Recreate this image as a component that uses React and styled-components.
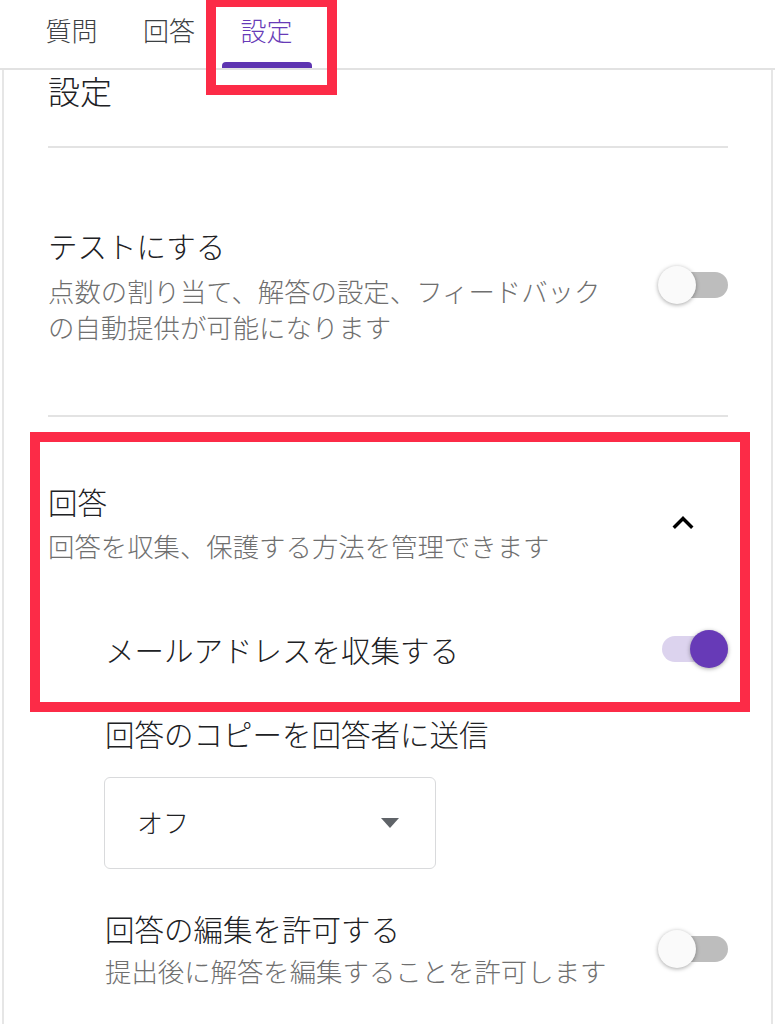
import React from "react";
import styled, { createGlobalStyle } from "styled-components";

const Global = createGlobalStyle`
  html, body { margin: 0; padding: 0; background: #ffffff; }
  body {
    font-family: "Noto Sans CJK JP", "Noto Sans", sans-serif;
    font-weight: 300;
    color: #202124;
    -webkit-font-smoothing: antialiased;
  }
  * { box-sizing: border-box; }
`;

const Page = styled.div`
  width: 775px;
  min-height: 1024px;
  overflow: hidden;
  display: flex;
  flex-direction: column;
`;

const TabBar = styled.div`
  height: 70px;
  display: flex;
  gap: 7.5px;
  padding-left: 26.5px;
  border-bottom: 2px solid #e2e2e2;
`;

const Tab = styled.div`
  position: relative;
  width: 90px;
  height: 68px;
  display: flex;
  flex-direction: column;
  align-items: center;
  justify-content: space-between;
  padding-top: 12px;
  font-size: 26px;
  line-height: 36px;
  color: ${(p) => (p.$active ? "#673ab7" : "#3c4043")};
`;

const Indicator = styled.div`
  width: 100%;
  height: 6px;
  border-radius: 4px 4px 0 0;
  background: #5e35b1;
`;

const Annotation = styled.div`
  position: absolute;
  border: 10px solid #fc2b47;
  pointer-events: none;
  z-index: 5;
`;

const TabAnnotation = styled(Annotation)`
  top: -3px;
  left: -16px;
  width: 131px;
  height: 98px;
`;

const Card = styled.div`
  flex: 1;
  margin: 0 2px;
  border-left: 2px solid #e6e6e6;
  border-right: 2px solid #e6e6e6;
  padding: 0 43px 40px 44px;
`;

const Heading = styled.div`
  font-size: 32px;
  line-height: 40px;
`;

const Divider = styled.div`
  height: 2px;
  background: #e3e3e3;
  margin-top: ${(p) => p.$top || 0}px;
`;

const Row = styled.div`
  display: flex;
  align-items: center;
  justify-content: space-between;
  padding-left: ${(p) => (p.$indent ? 57 : 0)}px;
  margin-top: ${(p) => p.$top || 0}px;
  margin-bottom: ${(p) => p.$bottom || 0}px;
`;

const TextBlock = styled.div`
  display: flex;
  flex-direction: column;
  gap: ${(p) => p.$gap || 8}px;
`;

const Title = styled.div`
  font-size: 29.5px;
  line-height: 40px;
  color: #202124;
`;

const Sub = styled.div`
  font-size: 26.4px;
  line-height: 36px;
  color: #6f6f6f;
  max-width: ${(p) => p.$max || 620}px;
`;

const SwitchBox = styled.div`
  position: relative;
  width: 70px;
  height: 38px;
  flex-shrink: 0;
`;

const Track = styled.div`
  position: absolute;
  left: 4px;
  right: 0;
  top: 6px;
  height: 26px;
  border-radius: 13px;
  background: ${(p) => (p.$on ? "#dcd3ee" : "#bdbdbd")};
`;

const Thumb = styled.div`
  position: absolute;
  top: 0;
  left: ${(p) => (p.$on ? 32 : 0)}px;
  width: 38px;
  height: 38px;
  border-radius: 50%;
  background: ${(p) => (p.$on ? "#673ab7" : "#fafafa")};
  box-shadow: 0 1px 4px rgba(0, 0, 0, 0.35);
`;

const Switch = ({ on }) => (
  <SwitchBox>
    <Track $on={on} />
    <Thumb $on={on} />
  </SwitchBox>
);

const Highlight = styled.div`
  position: relative;
`;

const BoxAnnotation = styled(Annotation)`
  top: 15px;
  left: -18px;
  right: -22px;
  bottom: -43px;
`;

const SectionHeader = styled.div`
  display: flex;
  align-items: center;
  justify-content: space-between;
  padding-top: 64px;
`;

const IconButton = styled.div`
  width: 48px;
  height: 48px;
  margin-right: 21px;
  display: flex;
  align-items: center;
  justify-content: center;
  color: #000;
`;

const Label = styled.div`
  font-size: 29.5px;
  line-height: 40px;
  padding-left: 57px;
  margin-top: 44px;
`;

const SelectBox = styled.div`
  margin: 24px 0 0 56px;
  width: 332px;
  height: 92px;
  border: 1.5px solid #d9dadc;
  border-radius: 6px;
  display: flex;
  align-items: center;
  justify-content: space-between;
  padding: 0 36px 4px 32px;
  font-size: 26px;
  color: #202124;
`;

const Caret = styled.svg`
  margin-top: 4px;
`;

export default function App() {
  return (
    <Page>
      <Global />
      <TabBar>
        <Tab>
          <span>質問</span>
        </Tab>
        <Tab>
          <span>回答</span>
        </Tab>
        <Tab $active>
          <span>設定</span>
          <Indicator />
          <TabAnnotation />
        </Tab>
      </TabBar>
      <Card>
        <Heading>設定</Heading>
        <Divider $top={36} />
        <Row $top={77} $bottom={70}>
          <TextBlock>
            <Title>テストにする</Title>
            <Sub $max={570}>点数の割り当て、解答の設定、フィードバックの自動提供が可能になります</Sub>
          </TextBlock>
          <Switch on={false} />
        </Row>
        <Divider />
        <Highlight>
          <SectionHeader>
            <TextBlock $gap={7}>
              <Title>回答</Title>
              <Sub>回答を収集、保護する方法を管理できます</Sub>
            </TextBlock>
            <IconButton>
              <svg width="42" height="42" viewBox="0 0 24 24" fill="currentColor">
                <path d="M12 8l-6 6 1.41 1.41L12 10.83l4.59 4.58L18 14z" />
              </svg>
            </IconButton>
          </SectionHeader>
          <Row $indent $top={65}>
            <Title>メールアドレスを収集する</Title>
            <Switch on />
          </Row>
          <BoxAnnotation />
        </Highlight>
        <Label>回答のコピーを回答者に送信</Label>
        <SelectBox>
          <span>オフ</span>
          <Caret width="18" height="10" viewBox="0 0 18 10">
            <path d="M0 0h18L9 10z" fill="#5f6368" />
          </Caret>
        </SelectBox>
        <Row $indent $top={39}>
          <TextBlock $gap={5}>
            <Title>回答の編集を許可する</Title>
            <Sub>提出後に解答を編集することを許可します</Sub>
          </TextBlock>
          <Switch on={false} />
        </Row>
      </Card>
    </Page>
  );
}
